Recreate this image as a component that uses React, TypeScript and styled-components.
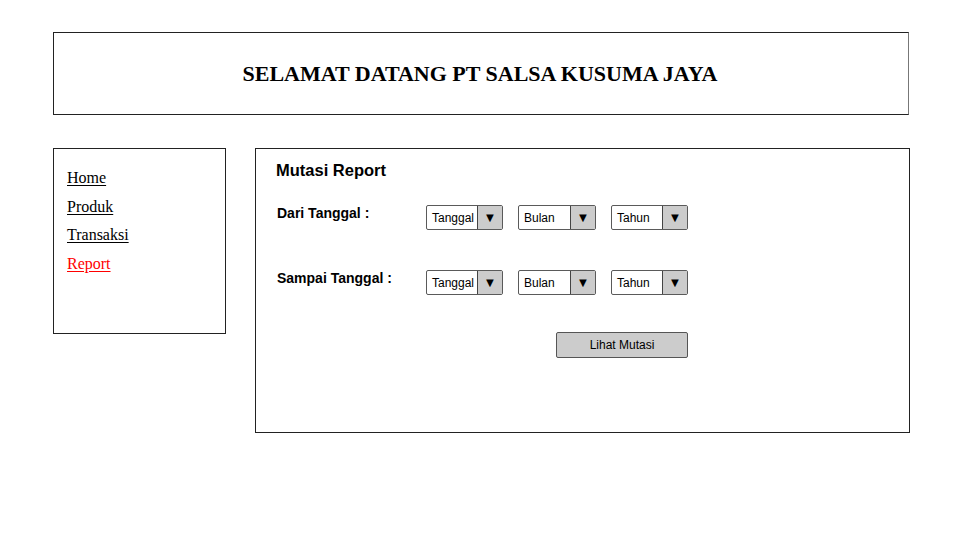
import React from "react";
import styled, { createGlobalStyle } from "styled-components";

const Global = createGlobalStyle`
  html, body { margin: 0; padding: 0; background: #fff; }
  body { font-family: "Liberation Sans", Arial, sans-serif; }
`;

const Page = styled.div`
  width: 977px;
  height: 545px;
  box-sizing: border-box;
  padding: 32px 0 0 53px;
  display: flex;
  flex-direction: column;
  gap: 33px;
`;

const Header = styled.header`
  width: 856px;
  height: 83px;
  box-sizing: border-box;
  border: 1px solid #222;
  border-right-color: #777;
  display: flex;
  align-items: center;
  justify-content: center;
  padding-right: 2px;
`;

const Title = styled.h1`
  margin: 0;
  font-family: "Liberation Serif", "Times New Roman", serif;
  font-weight: bold;
  font-size: 22px;
  color: #000;
`;

const Body = styled.div`
  display: flex;
  align-items: flex-start;
  gap: 29px;
`;

const Sidebar = styled.nav`
  width: 173px;
  height: 186px;
  box-sizing: border-box;
  border: 1px solid #222;
  padding: 19px 0 0 13px;
  display: flex;
  flex-direction: column;
  gap: 9.5px;
`;

const NavLink = styled.a<{ $active?: boolean }>`
  font-family: "Liberation Serif", "Times New Roman", serif;
  font-size: 16px;
  line-height: 19px;
  color: ${(p) => (p.$active ? "#ff0000" : "#000")};
  text-decoration: underline;
  text-underline-offset: 2px;
  align-self: flex-start;
  cursor: pointer;
`;

const Main = styled.section`
  width: 655px;
  height: 285px;
  box-sizing: border-box;
  border: 1px solid #222;
  padding: 11px 0 0 20px;
  display: flex;
  flex-direction: column;
`;

const PanelTitle = styled.h2`
  margin: 0;
  font-size: 16.5px;
  font-weight: bold;
  color: #000;
  line-height: 20px;
`;

const Form = styled.div`
  margin-top: 25px;
  display: grid;
  grid-template-columns: 150px auto;
  row-gap: 40px;
`;

const Label = styled.div`
  font-size: 14px;
  font-weight: bold;
  color: #000;
  padding-top: 1px;
  padding-left: 1px;
  line-height: 15px;
`;

const Selects = styled.div`
  display: flex;
  gap: 15px;
`;

const Select = styled.div<{ $w: number }>`
  width: ${(p) => p.$w}px;
  height: 25px;
  box-sizing: border-box;
  border: 1.5px solid #5a5a5a;
  border-radius: 2px;
  display: flex;
  background: #fff;
`;

const SelectText = styled.span`
  flex: 1;
  font-size: 12px;
  color: #000;
  display: flex;
  align-items: center;
  padding-left: 5px;
  overflow: hidden;
  white-space: nowrap;
`;

const SelectArrow = styled.span`
  width: 24px;
  background: #cccccc;
  border-left: 1.5px solid #444;
  display: flex;
  align-items: center;
  justify-content: center;
  font-size: 13px;
  color: #000;
`;

const ButtonRow = styled.div`
  margin-top: 37px;
  padding-left: 280px;
`;

const Button = styled.button`
  width: 132px;
  height: 26px;
  box-sizing: border-box;
  background: #cccccc;
  border: 1.5px solid #555;
  border-radius: 2px;
  font-family: "Liberation Sans", Arial, sans-serif;
  font-size: 12px;
  color: #000;
  padding: 0;
`;

function Dropdown({ label, w }: { label: string; w: number }) {
  return (
    <Select $w={w}>
      <SelectText>{label}</SelectText>
      <SelectArrow>▼</SelectArrow>
    </Select>
  );
}

function DateRow() {
  return (
    <Selects>
      <Dropdown label="Tanggal" w={77} />
      <Dropdown label="Bulan" w={78} />
      <Dropdown label="Tahun" w={77} />
    </Selects>
  );
}

export default function App() {
  return (
    <>
      <Global />
      <Page>
        <Header>
          <Title>SELAMAT DATANG PT SALSA KUSUMA JAYA</Title>
        </Header>
        <Body>
          <Sidebar>
            <NavLink>Home</NavLink>
            <NavLink>Produk</NavLink>
            <NavLink>Transaksi</NavLink>
            <NavLink $active>Report</NavLink>
          </Sidebar>
          <Main>
            <PanelTitle>Mutasi Report</PanelTitle>
            <Form>
              <Label>Dari Tanggal :</Label>
              <DateRow />
              <Label>Sampai Tanggal :</Label>
              <DateRow />
            </Form>
            <ButtonRow>
              <Button>Lihat Mutasi</Button>
            </ButtonRow>
          </Main>
        </Body>
      </Page>
    </>
  );
}
